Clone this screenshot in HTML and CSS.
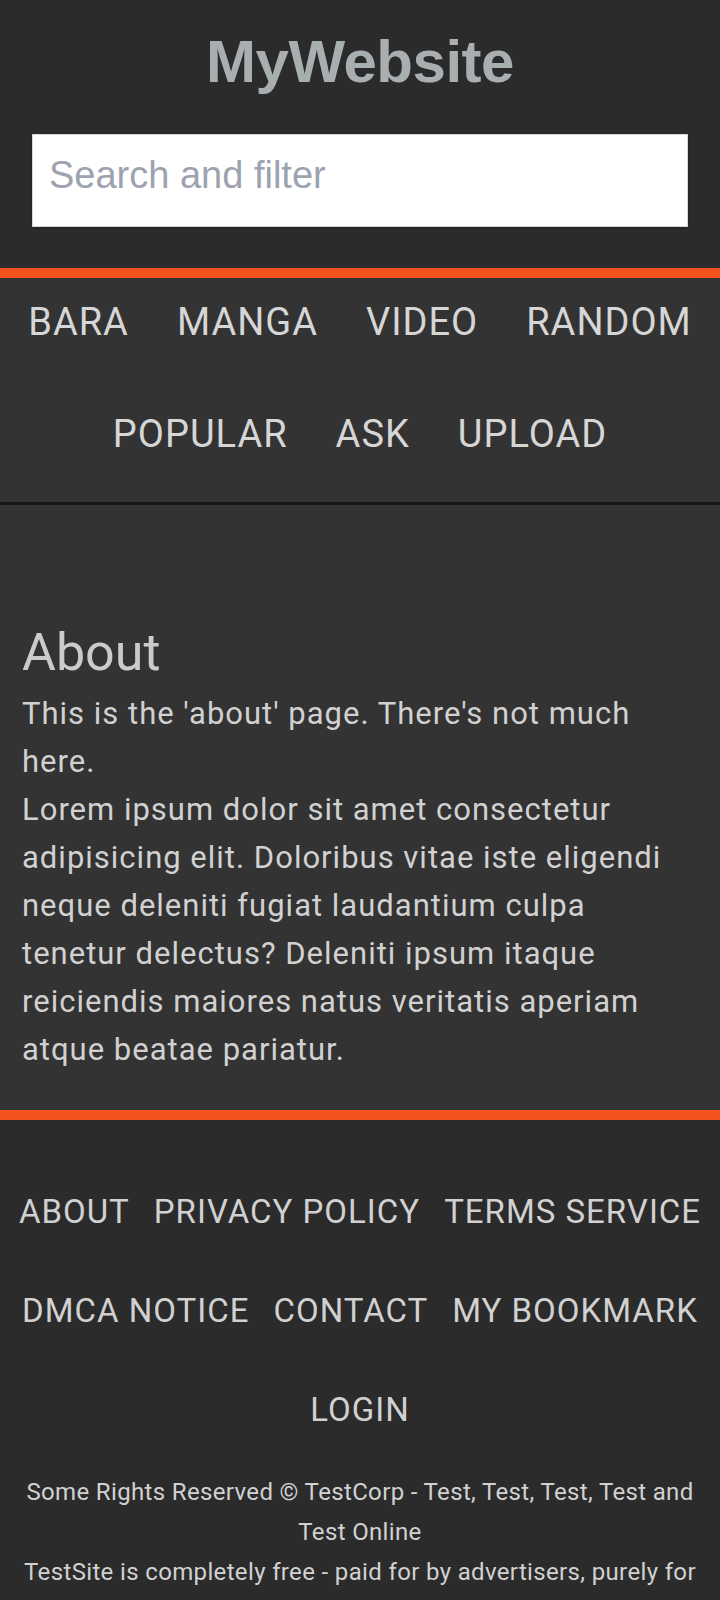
FILE: index.html
```html
<!DOCTYPE html>
<html lang="en">
<head>
<meta charset="utf-8">
<title>MyWebsite - About</title>
<link rel="stylesheet" href="styles.css">
</head>
<body>
<header class="site-header">
  <h1 class="site-title">MyWebsite</h1>
  <form class="search-form">
    <input class="search-input" type="text" placeholder="Search and filter">
  </form>
</header>
<nav class="main-nav">
  <a class="nav-link" href="#">BARA</a>
  <a class="nav-link" href="#">MANGA</a>
  <a class="nav-link" href="#">VIDEO</a>
  <a class="nav-link" href="#">RANDOM</a>
  <a class="nav-link" href="#">POPULAR</a>
  <a class="nav-link" href="#">ASK</a>
  <a class="nav-link" href="#">UPLOAD</a>
</nav>
<main class="content">
  <h2 class="page-title">About</h2>
  <p class="page-text">This is the 'about' page. There's not much here.</p>
  <p class="page-text">Lorem ipsum dolor sit amet consectetur adipisicing elit. Doloribus vitae iste eligendi neque deleniti fugiat laudantium culpa tenetur delectus? Deleniti ipsum itaque reiciendis maiores natus veritatis aperiam atque beatae pariatur.</p>
</main>
<footer class="site-footer">
  <div class="footer-links">
    <a class="footer-link" href="#">ABOUT</a>
    <a class="footer-link" href="#">PRIVACY POLICY</a>
    <a class="footer-link" href="#">TERMS SERVICE</a>
    <a class="footer-link" href="#">DMCA NOTICE</a>
    <a class="footer-link" href="#">CONTACT</a>
    <a class="footer-link" href="#">MY BOOKMARK</a>
    <a class="footer-link" href="#">LOGIN</a>
  </div>
  <p class="footer-note">Some Rights Reserved © TestCorp - Test, Test, Test, Test and Test Online</p>
  <p class="footer-note">TestSite is completely free - paid for by advertisers, purely for fun.</p>
</footer>
</body>
</html>
```
FILE: styles.css
```css
* {
  box-sizing: border-box;
}

html, body {
  margin: 0;
  padding: 0;
  background: #2b2b2b;
}

body {
  font-family: Roboto, "Liberation Sans", sans-serif;
  color: #d1d1d1;
}

a {
  text-decoration: none;
  color: inherit;
}

.site-header {
  background: #2b2b2b;
  padding: 27px 32px 41px 32px;
}

.site-title {
  margin: 0 0 38px 0;
  font-family: "Liberation Sans", Arial, sans-serif;
  font-weight: 700;
  font-size: 60px;
  line-height: 69px;
  text-align: center;
  color: #a9aeb1;
  letter-spacing: -0.5px;
}

.search-form {
  margin: 0;
}

.search-input {
  display: block;
  width: 100%;
  height: 93px;
  margin: 0;
  padding: 0 16px 10px 16px;
  border: 1px solid #d6d6d6;
  border-radius: 0;
  background: #ffffff;
  font-family: "Liberation Sans", Arial, sans-serif;
  font-size: 38px;
  color: #333;
  outline: none;
  box-shadow: 0 1px 2px rgba(0, 0, 0, 0.3);
}

.search-input::placeholder {
  color: #9ca3af;
}

.main-nav {
  background: #333333;
  border-top: 10px solid #f4511e;
  border-bottom: 3px solid #171717;
  display: flex;
  flex-wrap: wrap;
  justify-content: center;
}

.nav-link {
  font-size: 38px;
  line-height: 56px;
  letter-spacing: 1px;
  padding: 16px 24px 40px 24px;
  color: #d6d6d6;
}

.content {
  background: #333333;
  padding: 117px 22px 36px 22px;
}

.page-title {
  margin: 0 0 6px 0;
  font-size: 52px;
  font-weight: 400;
  line-height: 62px;
  color: #cbcbcb;
}

.page-text {
  margin: 0;
  font-size: 31px;
  line-height: 48px;
  letter-spacing: 1px;
  color: #d1d1d1;
}

.site-footer {
  background: #2b2b2b;
  border-top: 10px solid #f4511e;
  padding: 42px 16px 24px 16px;
}

.footer-links {
  display: flex;
  flex-wrap: wrap;
  justify-content: center;
  margin: 0 -16px 13px -16px;
}

.footer-link {
  font-size: 33px;
  line-height: 51px;
  letter-spacing: 1px;
  padding: 24px 12px;
  color: #d1d1d1;
}

.footer-note {
  margin: 0;
  font-size: 24px;
  line-height: 40px;
  letter-spacing: 0.35px;
  text-align: center;
  color: #d1d1d1;
}
```
